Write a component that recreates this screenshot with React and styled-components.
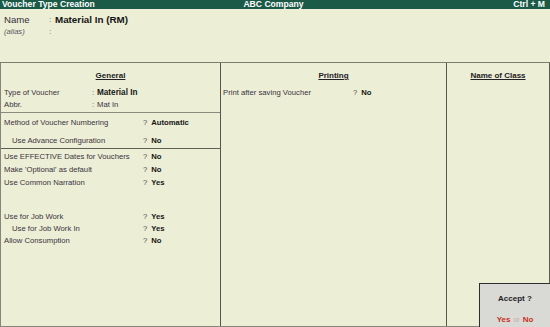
import React from "react";
import styled, { createGlobalStyle } from "styled-components";

// Tally style "Voucher Type Creation" screen

const GlobalStyle = createGlobalStyle`
  html, body {
    margin: 0;
    padding: 0;
    background: #eceed5;
  }
  body {
    font-family: "Liberation Sans", Arial, sans-serif;
  }
`;

const Window = styled.div`
  position: relative;
  width: 550px;
  height: 327px;
  display: flex;
  flex-direction: column;
  background: #eceed5;
  color: #342f3a;
  overflow: hidden;
`;

const TitleBar = styled.div`
  height: 9px;
  flex-shrink: 0;
  display: grid;
  grid-template-columns: 1fr auto 1fr;
  align-items: center;
  padding: 0 5px 0 2px;
  background: #1a5a47;
  color: #ffffff;
  font-size: 8.6px;
  font-weight: bold;
  line-height: 9px;
  white-space: nowrap;
`;

const TitleRight = styled.span`
  text-align: right;
`;

const Master = styled.div`
  box-sizing: border-box;
  height: 54px;
  flex-shrink: 0;
  padding: 4px 0 0 4px;
  border-bottom: 1px solid #7c7c6c;
`;

const MasterRow = styled.div`
  display: flex;
  align-items: center;
  height: 12px;
`;

const MasterLabel = styled.span`
  width: 45px;
  font-size: ${({ alias }) => (alias ? "7.6px" : "9.6px")};
  font-style: ${({ alias }) => (alias ? "italic" : "normal")};
  color: ${({ alias }) => (alias ? "#5a5560" : "#342f3a")};
`;

const Colon = styled.span`
  width: ${({ w }) => w || 6}px;
  font-size: 8px;
  color: #6a6570;
`;

const MasterValue = styled.span`
  font-size: 9.8px;
  font-weight: bold;
  color: #141414;
`;

const Main = styled.div`
  flex: 1;
  display: grid;
  grid-template-columns: 220px 226px 1fr;
  border-left: 1px solid #85857a;
  border-right: 1px solid #5d5d55;
  border-bottom: 1px solid #85857a;
`;

const Column = styled.div`
  display: flex;
  flex-direction: column;
  border-right: ${({ last }) => (last ? "none" : "1px solid #55554d")};
`;

const Section = styled.div`
  padding-top: ${({ top }) => top || 0}px;
  padding-bottom: ${({ bottom }) => bottom || 0}px;
  border-bottom: ${({ line }) => (line ? `1px solid ${line}` : "none")};
`;

const Heading = styled.div`
  height: 12px;
  line-height: 12px;
  margin-bottom: 4px;
  text-align: center;
  font-size: 8px;
  font-weight: bold;
  text-decoration: underline;
  color: #222026;
`;

const Row = styled.div`
  display: flex;
  align-items: center;
  height: ${({ h }) => h || 12}px;
  margin-top: ${({ gap }) => gap || 0}px;
  padding-left: ${({ pad }) => (pad === undefined ? 3 : pad)}px;
  font-size: 7.7px;
  white-space: nowrap;
`;

const Label = styled.span`
  box-sizing: border-box;
  width: ${({ w }) => w}px;
  padding-left: ${({ indent }) => (indent ? 8 : 0)}px;
  color: #3b3342;
`;

const Mark = styled.span`
  margin-right: 4px;
  color: #4c4752;
`;

const Value = styled.span`
  font-weight: ${({ plain }) => (plain ? "normal" : "bold")};
  font-size: ${({ big }) => (big ? "8.2px" : "7.7px")};
  color: ${({ plain }) => (plain ? "#3b3342" : "#161616")};
`;

const AcceptBox = styled.div`
  position: absolute;
  right: 0;
  bottom: 0;
  width: 71px;
  height: 44px;
  box-sizing: border-box;
  display: flex;
  flex-direction: column;
  align-items: center;
  background: #d9d9d6;
  border: 1px solid #2e2e2e;
  border-right: none;
  border-bottom: none;
`;

const AcceptTitle = styled.div`
  margin-top: 10px;
  font-size: 8px;
  font-weight: bold;
  color: #1e1e1e;
`;

const AcceptChoice = styled.div`
  margin-top: 12px;
  font-size: 8px;
  font-weight: bold;
  color: #c8301e;
`;

const Or = styled.span`
  margin: 0 3px;
  font-size: 7px;
  font-weight: normal;
  color: #c9a9a6;
`;

const leftFlags = [
  { label: "Use EFFECTIVE Dates for Vouchers", value: "No", h: 13 },
  { label: "Make 'Optional' as default", value: "No", h: 13 },
  { label: "Use Common Narration", value: "Yes", h: 13 },
  { label: "Use for Job Work", value: "Yes", gap: 21 },
  { label: "Use for Job Work In", value: "Yes", indent: true },
  { label: "Allow Consumption", value: "No" },
];

function Question({ label, value, w = 139, indent, h, gap }) {
  return (
    <Row h={h} gap={gap}>
      <Label w={w} indent={indent}>
        {label}
      </Label>
      <Mark>?</Mark>
      <Value>{value}</Value>
    </Row>
  );
}

export default function App() {
  return (
    <>
      <GlobalStyle />
      <Window>
        <TitleBar>
          <span>Voucher Type Creation</span>
          <span>ABC Company</span>
          <TitleRight>Ctrl + M</TitleRight>
        </TitleBar>

        <Master>
          <MasterRow>
            <MasterLabel>Name</MasterLabel>
            <Colon>:</Colon>
            <MasterValue>Material In (RM)</MasterValue>
          </MasterRow>
          <MasterRow>
            <MasterLabel alias>(alias)</MasterLabel>
            <Colon>:</Colon>
          </MasterRow>
        </Master>

        <Main>
          <Column>
            <Section top={7} bottom={2} line="#8b8b7d">
              <Heading>General</Heading>
              <Row>
                <Label w={88}>Type of Voucher</Label>
                <Colon w={5}>:</Colon>
                <Value big>Material In</Value>
              </Row>
              <Row>
                <Label w={88}>Abbr.</Label>
                <Colon w={5}>:</Colon>
                <Value plain>Mat In</Value>
              </Row>
            </Section>

            <Section top={3} bottom={2} line="#5f5f55">
              <Question label="Method of Voucher Numbering" value="Automatic" />
              <Question
                label="Use Advance Configuration"
                value="No"
                indent
                gap={6}
              />
            </Section>

            <Section top={1}>
              {leftFlags.map((f) => (
                <Question key={f.label} {...f} />
              ))}
            </Section>
          </Column>

          <Column>
            <Section top={7}>
              <Heading>Printing</Heading>
              <Row pad={2}>
                <Label w={130}>Print after saving Voucher</Label>
                <Mark>?</Mark>
                <Value>No</Value>
              </Row>
            </Section>
          </Column>

          <Column last>
            <Section top={7}>
              <Heading>Name of Class</Heading>
            </Section>
          </Column>
        </Main>

        <AcceptBox>
          <AcceptTitle>Accept ?</AcceptTitle>
          <AcceptChoice>
            Yes<Or>or</Or>No
          </AcceptChoice>
        </AcceptBox>
      </Window>
    </>
  );
}
